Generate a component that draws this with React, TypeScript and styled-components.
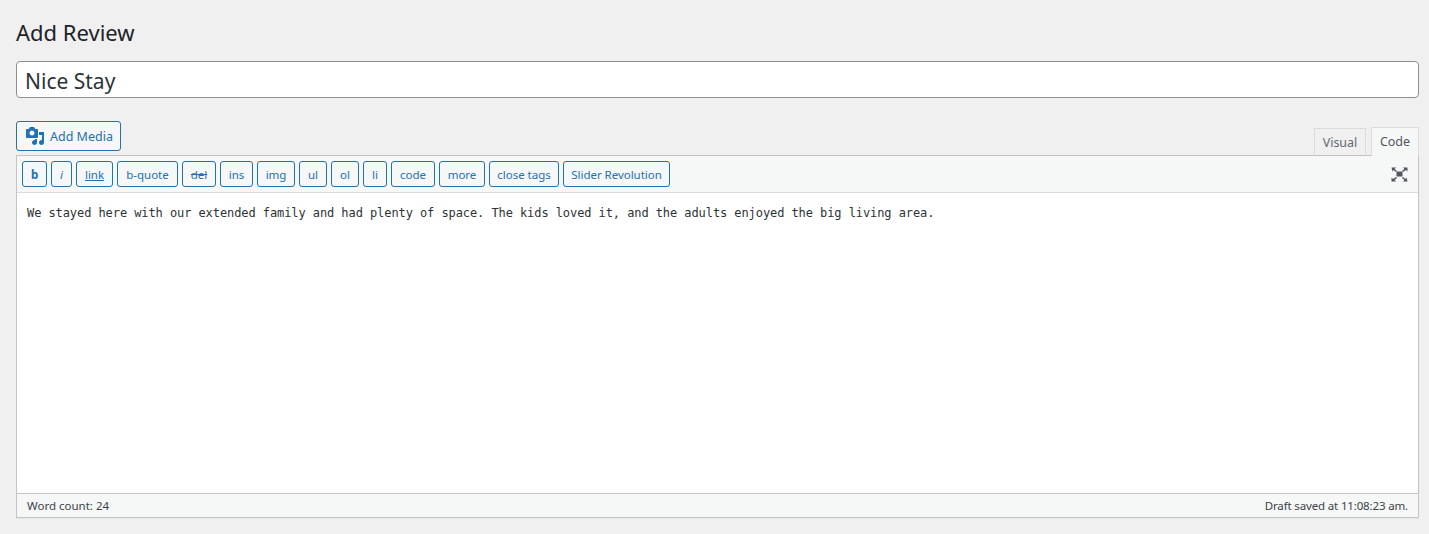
import React from "react";
import styled, { createGlobalStyle } from "styled-components";

const Global = createGlobalStyle`
  html, body { margin: 0; padding: 0; background: #f0f0f1; }
  body { font-family: "Noto Sans", "Open Sans", sans-serif; color: #3c434a; }
  * { box-sizing: border-box; }
`;

const Page = styled.div`
  height: 534px;
  padding: 0 10px 0 16px;
  display: flex;
  flex-direction: column;
  overflow: hidden;
`;

const Heading = styled.h1`
  margin: 0;
  padding-top: 17px;
  height: 61px;
  font-size: 22px;
  line-height: 30px;
  font-weight: 400;
  color: #1d2327;
`;

const TitleInput = styled.div`
  height: 37px;
  background: #fff;
  border: 1px solid #8c8f94;
  border-radius: 4px;
  padding: 0 8px;
  font-size: 21px;
  line-height: 38px;
  color: #2c3338;
`;

const EditorHead = styled.div`
  margin-top: 23px;
  height: 34px;
  display: flex;
  justify-content: space-between;
  position: relative;
`;

const MediaButton = styled.div`
  width: 105px;
  height: 30px;
  border: 1px solid #2271b1;
  border-radius: 3px;
  background: #f6f7f7;
  color: #2271b1;
  font-size: 12.5px;
  display: flex;
  align-items: center;
  padding-left: 8px;
  gap: 5px;
`;

const Tabs = styled.div`
  display: flex;
  gap: 5px;
  align-self: flex-end;
  margin-bottom: -1px;
  position: relative;
`;

const Tab = styled.div<{ $active?: boolean; $w: number }>`
  width: ${(p) => p.$w}px;
  height: ${(p) => (p.$active ? 29 : 28)}px;
  margin-top: ${(p) => (p.$active ? 0 : 1)}px;
  border: 1px solid #dcdcde;
  border-bottom: ${(p) => (p.$active ? "none" : "1px solid #c3c4c7")};
  background: ${(p) => (p.$active ? "#f6f7f7" : "#f0f0f1")};
  color: ${(p) => (p.$active ? "#50575e" : "#646970")};
  font-size: 12.5px;
  line-height: 27px;
  text-align: center;
`;

const Editor = styled.div`
  height: 363px;
  border: 1px solid #c3c4c7;
  box-shadow: 0 1px 1px rgba(0, 0, 0, 0.04);
  display: flex;
  flex-direction: column;
  background: #fff;
`;

const Toolbar = styled.div`
  height: 37px;
  flex: none;
  background: #f6f7f7;
  border-bottom: 1px solid #dcdcde;
  padding: 5px 0 0 5px;
  display: flex;
  gap: 4px;
  position: relative;
`;

const QButton = styled.div<{ $w: number; $strike?: boolean; $under?: boolean; $bold?: boolean; $italic?: boolean }>`
  width: ${(p) => p.$w}px;
  height: 26px;
  flex: none;
  border: 1px solid #2271b1;
  border-radius: 3px;
  background: #f6f7f7;
  color: #2271b1;
  font-size: 11.5px;
  letter-spacing: -0.03px;
  line-height: 25px;
  text-align: center;
  font-weight: ${(p) => (p.$bold ? 700 : 400)};
  font-style: ${(p) => (p.$italic ? "italic" : "normal")};
  text-decoration: ${(p) => (p.$strike ? "line-through" : p.$under ? "underline" : "none")};
`;

const ExpandButton = styled.div`
  margin-left: auto;
  width: 28px;
  height: 26px;
  margin-right: 5px;
  color: #50575e;
  display: flex;
  align-items: center;
  justify-content: center;
`;

const Body = styled.div`
  flex: 1;
  background: #fff;
  padding: 12px 10px;
  font-family: "DejaVu Sans Mono", monospace;
  font-size: 12px;
  line-height: 16px;
  letter-spacing: -0.08px;
  color: #2c3338;
  white-space: pre;
`;

const StatusBar = styled.div`
  height: 24px;
  flex: none;
  background: #f6f7f7;
  border-top: 1px solid #c3c4c7;
  padding: 0 10px;
  display: flex;
  justify-content: space-between;
  align-items: center;
  font-size: 11.5px;
  color: #3c434a;
`;

const DraftNote = styled.span`
  letter-spacing: -0.15px;
`;

const buttons: { label: string; w: number; strike?: boolean; under?: boolean; bold?: boolean; italic?: boolean }[] = [
  { label: "b", w: 25, bold: true },
  { label: "i", w: 21, italic: true },
  { label: "link", w: 37, under: true },
  { label: "b-quote", w: 61 },
  { label: "del", w: 34, strike: true },
  { label: "ins", w: 33 },
  { label: "img", w: 38 },
  { label: "ul", w: 28 },
  { label: "ol", w: 28 },
  { label: "li", w: 24 },
  { label: "code", w: 44 },
  { label: "more", w: 46 },
  { label: "close tags", w: 70 },
  { label: "Slider Revolution", w: 107 },
];

export default function App() {
  return (
    <Page>
      <Global />
      <Heading>Add Review</Heading>
      <TitleInput>Nice Stay</TitleInput>
      <EditorHead>
        <MediaButton>
          <svg width="20" height="20" viewBox="0 0 20 20" fill="#2271b1">
            <path d="M13 11V4c0-.55-.45-1-1-1h-1.67L9 1H5L3.67 3H2c-.55 0-1 .45-1 1v7c0 .55.45 1 1 1h10c.55 0 1-.45 1-1zM7 4.5c1.38 0 2.5 1.12 2.5 2.5S8.38 9.5 7 9.5 4.5 8.38 4.5 7 5.62 4.5 7 4.5zM14 6h5v10.5c0 1.38-1.12 2.5-2.5 2.5S14 17.88 14 16.5s1.12-2.5 2.5-2.5c.17 0 .34.02.5.05V9h-3V6zm-4 8.05V13h2v3.5c0 1.38-1.12 2.5-2.5 2.5S7 17.88 7 16.5 8.12 14 9.5 14c.17 0 .34.02.5.05z" />
          </svg>
          Add Media
        </MediaButton>
        <Tabs>
          <Tab $w={52}>Visual</Tab>
          <Tab $w={48} $active>Code</Tab>
        </Tabs>
      </EditorHead>
      <Editor>
        <Toolbar>
          {buttons.map((b) => (
            <QButton key={b.label} $w={b.w} $strike={b.strike} $under={b.under} $bold={b.bold} $italic={b.italic}>
              {b.label}
            </QButton>
          ))}
          <ExpandButton>
            <svg width="17" height="15" viewBox="0 0 17 15" fill="currentColor">
              <path d="M5.500 4.500h6v5h-6z" />
              <path d="M0.500 0.500h4.500L3.600 1.900 6 4 5 5 2.700 2.900 1.500 4.500zM16.500 0.500v4L15 3 12 5 11 4 13.400 1.900 12 0.500zM0.500 14.500v-4L2 12 5 10 6 11 3.600 13.100 5 14.500zM16.500 14.500H12l1.400-1.400L11 11 12 10 14.300 12.100 15.500 10.500z" />
            </svg>
          </ExpandButton>
        </Toolbar>
        <Body>We stayed here with our extended family and had plenty of space. The kids loved it, and the adults enjoyed the big living area.</Body>
        <StatusBar>
          <span>Word count: 24</span>
          <DraftNote>Draft saved at 11:08:23 am.</DraftNote>
        </StatusBar>
      </Editor>
    </Page>
  );
}
